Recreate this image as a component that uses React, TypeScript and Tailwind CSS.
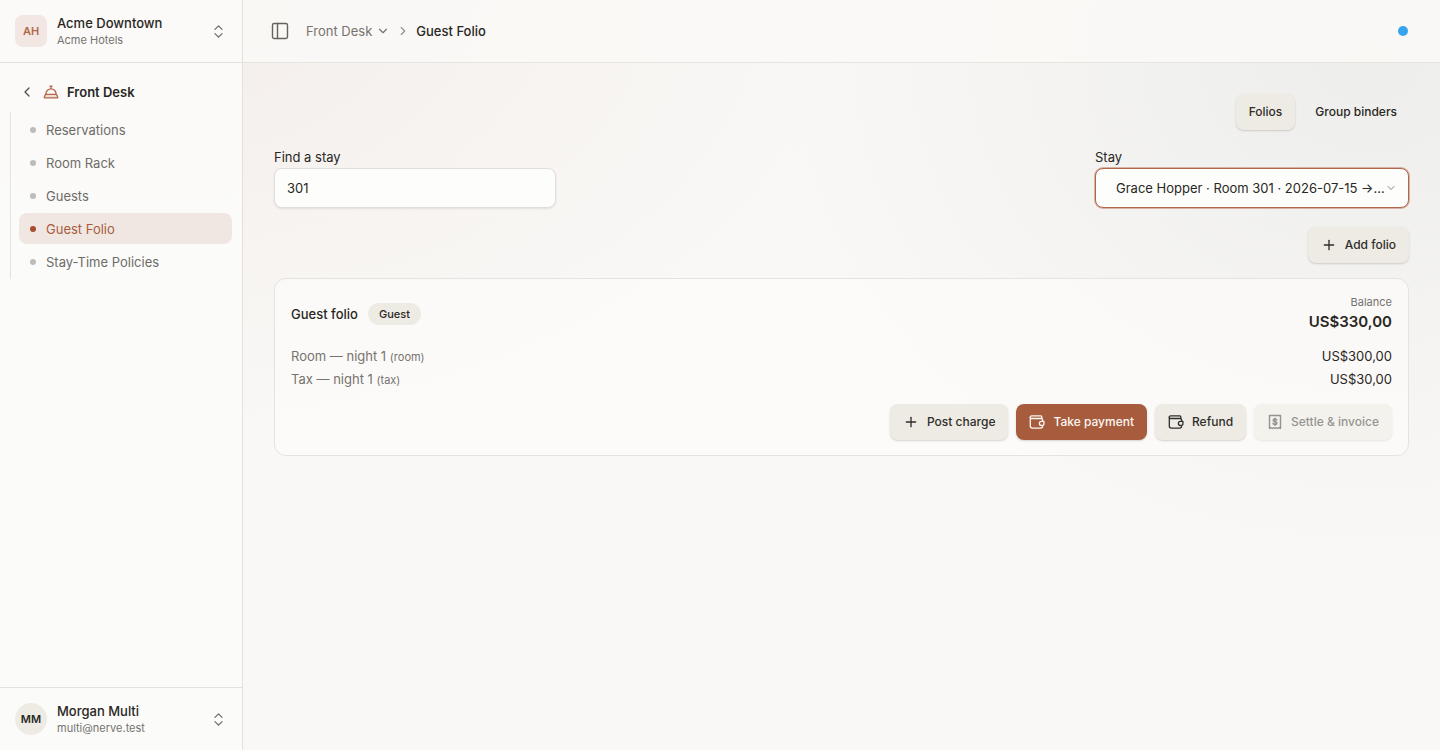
import type { ReactNode } from "react";
import { ChevronDown, ChevronLeft, ChevronRight, ChevronsUpDown, PanelLeft, Plus } from "lucide-react";

const navItems = [
  { label: "Reservations", active: false },
  { label: "Room Rack", active: false },
  { label: "Guests", active: false },
  { label: "Guest Folio", active: true },
  { label: "Stay-Time Policies", active: false },
];

const charges = [
  { name: "Room — night 1", kind: "(room)", amount: "US$300,00" },
  { name: "Tax — night 1", kind: "(tax)", amount: "US$30,00" },
];

function BellIcon() {
  return (
    <svg width="16" height="16" viewBox="0 0 16 16" fill="none" stroke="currentColor" strokeWidth="1.3" strokeLinecap="round" strokeLinejoin="round" aria-hidden="true">
      <path d="M3 10.200V9.800a5 5 0 0 1 10 0v.4" />
      <path d="M2.600 10.300h10.800l1.300 2.600a.6.6 0 0 1-.6.9H1.900a.6.6 0 0 1-.6-.9z" fill="currentColor" fillOpacity="0.2" />
      <path d="M8 4.600V2.200M6.900 2.200h2.200" />
    </svg>
  );
}

function WalletIcon() {
  return (
    <svg width="16" height="16" viewBox="0 0 16 16" fill="none" stroke="currentColor" strokeWidth="1.3" strokeLinecap="round" strokeLinejoin="round" aria-hidden="true">
      <path d="M13.600 7V5.900A1.400 1.400 0 0 0 12.200 4.500H2.600A1.200 1.200 0 0 1 1.300 3.200 1.300 1.300 0 0 1 2.600 1.800h9.200a1 1 0 0 1 1 1v1.700" />
      <path d="M1.300 3.200v8.900a2 2 0 0 0 2 2h8.300a2 2 0 0 0 2-2v-.5" />
      <path d="M14.900 7.400h-2.500a2 2 0 0 0 0 4h1.600l.9-1z" />
    </svg>
  );
}

function InvoiceIcon() {
  return (
    <svg width="16" height="16" viewBox="0 0 16 16" fill="none" stroke="currentColor" strokeWidth="1.4" strokeLinecap="round" strokeLinejoin="round" aria-hidden="true">
      <path d="M2.500 1.500h11v13l-1.400-.8-1.300.8-1.400-.8-1.400.8-1.400-.8-1.300.8-1.400-.8-1.400.8z" />
      <path d="M9.900 6c-.2-.7-.9-1-1.900-1s-1.900.4-1.900 1.300c0 2 3.900.8 3.900 2.900 0 .9-.9 1.300-2 1.300s-1.900-.4-2-1.200M8 4.200v7.200" />
    </svg>
  );
}

type ButtonProps = { icon?: ReactNode; children: ReactNode; primary?: boolean; disabled?: boolean };

function Button({ icon, children, primary, disabled }: ButtonProps) {
  const tone = primary ? "bg-[#a75c3e] text-[#fcf7f2]" : "bg-[#edebe4] text-[#302e2a]";
  return (
    <button
      type="button"
      disabled={disabled}
      className={`flex h-9 items-center gap-2 rounded-lg px-[13px] text-xs font-medium whitespace-nowrap shadow-[0_1px_2px_rgba(60,50,40,0.2)] disabled:opacity-50 ${tone}`}
    >
      {icon}
      {children}
    </button>
  );
}

function Sidebar() {
  return (
    <aside className="flex w-[243px] shrink-0 flex-col border-r border-[#e2e1de] bg-[#fcfcfa]/85">
      <button type="button" className="flex h-[63px] items-center gap-2.5 border-b border-[#e2e1de] px-[15px] text-left">
        <span className="flex size-8 items-center justify-center rounded-lg bg-[#f2e7e2] text-[11px] font-semibold text-[#b2674b]">AH</span>
        <span className="flex-1">
          <span className="block leading-[18px] font-medium">Acme Downtown</span>
          <span className="block text-[11px] leading-4 text-[#75736f]">Acme Hotels</span>
        </span>
        <ChevronsUpDown size={17} strokeWidth={1.7} className="text-[#6b6965]" />
      </button>

      <nav aria-label="Front Desk" className="flex-1 px-2.5 pt-[15px]">
        <button type="button" className="flex h-[27px] items-center gap-2 pl-[9px] font-semibold">
          <ChevronLeft size={16} strokeWidth={2} className="text-[#55534f]" />
          <span className="text-[#b2674b]">
            <BellIcon />
          </span>
          Front Desk
        </button>
        <ul className="mt-[7px] flex flex-col gap-0.5 border-l border-[#e5e4e1] py-0.5 pl-2">
          {navItems.map((item) => (
            <li key={item.label}>
              <a
                href="#"
                aria-current={item.active ? "page" : undefined}
                className={`flex h-[31px] items-center gap-2.5 rounded-lg px-[11px] ${item.active ? "bg-[#f1e7e2] text-[#a75c3e]" : "text-[#6e6c68]"}`}
              >
                <span className={`size-1.5 rounded-full ${item.active ? "bg-[#a94f30]" : "bg-[#bdbcb9]"}`} />
                {item.label}
              </a>
            </li>
          ))}
        </ul>
      </nav>

      <button type="button" className="flex h-[63px] items-center gap-2.5 border-t border-[#e2e1de] px-[15px] text-left">
        <span className="flex size-8 items-center justify-center rounded-full bg-[#edebe4] text-[11px] font-semibold">MM</span>
        <span className="flex-1">
          <span className="block leading-[18px] font-medium">Morgan Multi</span>
          <span className="block text-[11px] leading-4 text-[#75736f]">multi@nerve.test</span>
        </span>
        <ChevronsUpDown size={17} strokeWidth={1.7} className="text-[#6b6965]" />
      </button>
    </aside>
  );
}

function Header() {
  return (
    <header className="flex h-[63px] items-center border-b border-[#e7e4e0] bg-[#faf9f7]/85 pr-8 pl-[27px]">
      <button type="button" aria-label="Toggle sidebar" className="text-[#65635f]">
        <PanelLeft size={20} strokeWidth={1.7} />
      </button>
      <nav aria-label="Breadcrumb" className="ml-4 flex items-center">
        <button type="button" className="flex items-center gap-1 text-[#75736f]">
          Front Desk
          <ChevronDown size={14} />
        </button>
        <ChevronRight size={14} className="mx-1.5 text-[#93918d]" />
        <span aria-current="page" className="font-medium">Guest Folio</span>
      </nav>
      <span role="status" aria-label="Online" className="ml-auto size-2.5 rounded-full bg-[#36a3ef]" />
    </header>
  );
}

function FolioCard() {
  return (
    <section className="mt-[15px] rounded-xl border border-[#e4e3e0] bg-[#fdfcfb]/65 px-4 py-[15px]">
      <div className="flex items-center justify-between">
        <div className="flex items-center gap-2.5">
          <h2 className="font-medium">Guest folio</h2>
          <span className="flex h-[22px] items-center rounded-full bg-[#edebe4] px-[11px] text-[11px] font-medium">Guest</span>
        </div>
        <div className="text-right">
          <p className="text-[11px] leading-4 text-[#75736f]">Balance</p>
          <p className="text-[15px] leading-6 font-semibold">US$330,00</p>
        </div>
      </div>
      <ul className="mt-3 flex flex-col gap-[3px]">
        {charges.map((charge) => (
          <li key={charge.name} className="flex h-5 justify-between">
            <span className="text-[#75736f]">
              {charge.name} <span className="text-[11px]">{charge.kind}</span>
            </span>
            <span>{charge.amount}</span>
          </li>
        ))}
      </ul>
      <div className="mt-[15px] flex flex-wrap justify-end gap-2">
        <Button icon={<Plus size={16} strokeWidth={2} />}>Post charge</Button>
        <Button primary icon={<WalletIcon />}>Take payment</Button>
        <Button icon={<WalletIcon />}>Refund</Button>
        <Button disabled icon={<InvoiceIcon />}>Settle &amp; invoice</Button>
      </div>
    </section>
  );
}

export default function App() {
  return (
    <div className="flex min-h-screen bg-[#f9f8f6] bg-[radial-gradient(ellipse_720px_440px_at_10%_0%,rgba(178,103,75,0.07),transparent),radial-gradient(ellipse_600px_500px_at_95%_8%,rgba(90,100,105,0.07),transparent)] font-[Inter,sans-serif] text-[13px] leading-5 text-[#292723]">
      <Sidebar />
      <div className="flex min-w-0 flex-1 flex-col">
        <Header />
        <main className="flex-1 px-[31px] pt-[31px]">
          <div className="flex justify-end gap-2">
            <Button>Folios</Button>
            <button type="button" className="h-9 rounded-lg px-3 text-xs font-medium">Group binders</button>
          </div>

          <div className="mt-4 flex justify-between gap-4">
            <div className="w-[282px]">
              <label htmlFor="find-stay" className="block leading-[22px]">Find a stay</label>
              <input
                id="find-stay"
                type="text"
                defaultValue="301"
                className="h-10 w-full rounded-lg border border-[#dfdedb] bg-[#fdfdfb] px-3 shadow-[0_1px_2px_rgba(60,50,40,0.1)] outline-none"
              />
            </div>
            <div className="w-[314px]">
              <label htmlFor="stay" className="block leading-[22px]">Stay</label>
              <div className="relative">
                <select
                  id="stay"
                  className="h-10 w-full appearance-none rounded-lg border border-[#b2674b] bg-[#fdfdfb] pr-5 pl-5 shadow-[0_0_0_1px_rgba(178,103,75,0.45)] outline-none"
                >
                  <option>Grace Hopper · Room 301 · 2026-07-15 →…</option>
                </select>
                <ChevronDown size={12} className="pointer-events-none absolute top-3.5 right-3 text-[#85837f]" />
              </div>
            </div>
          </div>

          <div className="mt-[19px] flex justify-end">
            <Button icon={<Plus size={16} strokeWidth={2} />}>Add folio</Button>
          </div>

          <FolioCard />
        </main>
      </div>
    </div>
  );
}
